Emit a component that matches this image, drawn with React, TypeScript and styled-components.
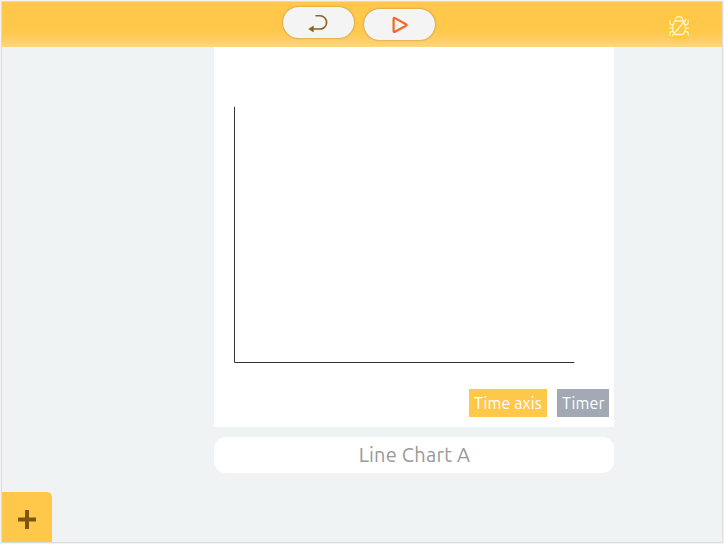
import React from "react";
import styled, { createGlobalStyle } from "styled-components";

const GlobalStyle = createGlobalStyle`
  * { box-sizing: border-box; }
  body {
    margin: 0;
    background: #f2f2f2;
    overflow: hidden;
    font-family: Ubuntu, "Noto Sans", sans-serif;
  }
`;

const Frame = styled.div`
  width: 722px;
  height: 542px;
  margin: 1px;
  border: 1px solid #dcdddf;
  background: #eff3f4;
  display: flex;
  flex-direction: column;
  position: relative;
`;

const Header = styled.header`
  flex: none;
  height: 45px;
  background: linear-gradient(to bottom, #ffc84a 0, #ffc84a 28px, #ffcc5c 36px, #ffd67c 45px);
  display: grid;
  grid-template-columns: 1fr auto 1fr;
`;

const Controls = styled.div`
  grid-column: 2;
  display: flex;
  gap: 10px;
  padding: 5px 0 0 3px;
  margin-right: 9px;
`;

const PillButton = styled.button<{ $drop?: number }>`
  width: 71px;
  height: 31px;
  margin: ${({ $drop = 0 }) => $drop}px 0 0;
  padding: 0;
  border: 0;
  border-radius: 16px;
  background: #f4f4f4;
  box-shadow: 0 0 2px rgba(90, 70, 20, 0.6);
  display: flex;
  align-items: center;
  justify-content: center;
`;

const DebugButton = styled.button`
  grid-column: 3;
  justify-self: end;
  width: 34px;
  height: 34px;
  margin: 7px 26px 0 0;
  padding: 0;
  border: 0;
  border-radius: 50%;
  background: radial-gradient(circle, #ffc93e 0, #ffc93e 45%, rgba(255, 201, 62, 0) 70%);
  display: flex;
  align-items: center;
  justify-content: center;
`;

const Icon = styled.svg`
  display: block;
  flex: none;
`;

const Workspace = styled.main`
  flex: 1;
  display: flex;
  flex-direction: column;
  align-items: center;
  gap: 10px;
  margin-left: 104px;
`;

const ChartCard = styled.section`
  width: 400px;
  height: 380px;
  background: #fff;
  display: flex;
  flex-direction: column;
`;

const Axes = styled.svg`
  display: block;
  width: 400px;
  height: 342px;
`;

const Tags = styled.div`
  display: flex;
  justify-content: flex-end;
  gap: 10px;
  padding-right: 5px;
`;

const Tag = styled.button<{ $color: string }>`
  height: 28px;
  padding: 0 5px;
  border: 0;
  background: ${({ $color }) => $color};
  color: #fff;
  font: 16px/28px Ubuntu, "Noto Sans", sans-serif;
  letter-spacing: 0.15px;
  white-space: nowrap;
  text-align: center;

  &:first-child { width: 78px; }
  &:last-child { width: 52px; }
`;

const Title = styled.div`
  width: 400px;
  height: 36px;
  padding-left: 1px;
  border-radius: 12px;
  background: #fff;
  color: #999;
  font-size: 20px;
  line-height: 35px;
  letter-spacing: 0.22px;
  text-align: center;
`;

const AddButton = styled.button`
  position: absolute;
  left: 0;
  bottom: 0;
  width: 50px;
  height: 50px;
  padding: 5px 0 0;
  border: 0;
  border-radius: 0 5px 0 0;
  background: #ffc84a;
  display: flex;
  align-items: center;
  justify-content: center;
`;

const ReturnIcon = () => (
  <Icon width="24" height="22" viewBox="0 0 24 22" fill="none">
    <path d="M9 3.8h4a6.6 6.6 0 0 1 0 13.2H6" stroke="#866321" strokeWidth="1.6" strokeLinecap="round" />
    <path d="M1.6 17l4.8-2.9v5.8z" fill="#866321" stroke="#866321" strokeWidth="0.5" strokeLinejoin="round" />
  </Icon>
);

const PlayIcon = () => (
  <Icon width="20" height="20" viewBox="0 0 20 20" fill="none">
    <path d="M3.6 4v11.8q0 1.6 1.4.9L16 10.7q1.2-.8 0-1.5L5 3.1q-1.4-.8-1.4.9z" stroke="#f36527" strokeWidth="2.2" strokeLinejoin="round" />
  </Icon>
);

const BugIcon = () => (
  <Icon width="24" height="24" viewBox="0 0 24 24" fill="none" stroke="#fff3cc" strokeWidth="1.3" strokeLinecap="round">
    <path d="M8.2 6.3C8.4 1.5 15.6 1.5 15.8 6.3M7.5 7h9M7 8.3c-2.4 4.2-1.7 9.8 1.2 12.2h7.6c2.9-2.4 3.6-8 1.2-12.2M19 5.5 5.5 21.5M6.5 10.7H4.3Q2.7 10.7 2.7 6.5M17.5 10.7h2.2q1.6 0 1.6-4.2M5.5 14.2H2.5M18.5 14.2h3M6.5 17.7H4.3q-1.6 0-1.6 3.7M17.5 17.7h2.2q1.6 0 1.6 3.7" />
  </Icon>
);

export default function App() {
  return (
    <>
      <GlobalStyle />
      <Frame>
        <Header>
          <Controls>
            <PillButton aria-label="Back"><ReturnIcon /></PillButton>
            <PillButton aria-label="Run" $drop={2}><PlayIcon /></PillButton>
          </Controls>
          <DebugButton aria-label="Debug"><BugIcon /></DebugButton>
        </Header>
        <Workspace>
          <ChartCard>
            <Axes viewBox="0 0 400 342">
              <path d="M20.5 59.8V315.5H360.3" fill="none" stroke="#333" strokeWidth="1" />
            </Axes>
            <Tags>
              <Tag $color="#ffc84a">Time axis</Tag>
              <Tag $color="#a3a8b5">Timer</Tag>
            </Tags>
          </ChartCard>
          <Title>Line Chart A</Title>
        </Workspace>
        <AddButton aria-label="Add">
          <Icon width="18" height="19" viewBox="0 0 18 19" fill="none">
            <path d="M9 0v19M0 9.5h18" stroke="#7d5612" strokeWidth="4" />
          </Icon>
        </AddButton>
      </Frame>
    </>
  );
}
